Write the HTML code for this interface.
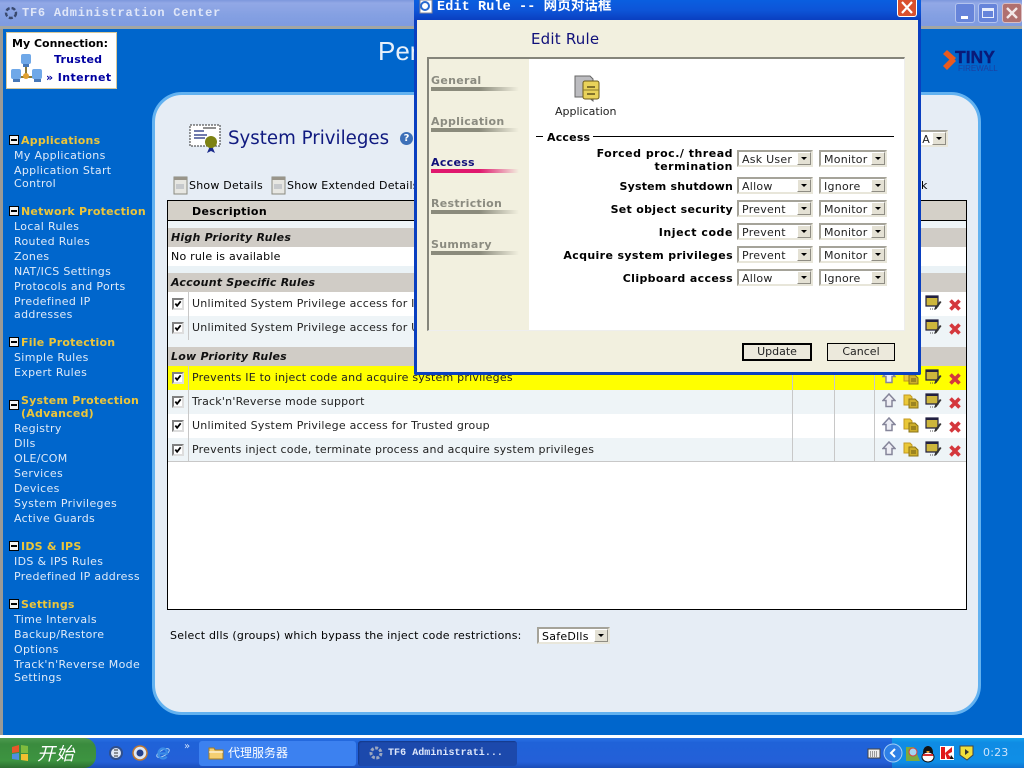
<!DOCTYPE html>
<html><head><meta charset="utf-8"><style>
html,body{margin:0;padding:0;width:1024px;height:768px;overflow:hidden;background:#fff}
#r{position:absolute;left:0;top:0;width:1024px;height:768px;overflow:hidden;background:#fff;font-family:"DejaVu Sans","Noto Sans CJK SC",sans-serif}
.a{position:absolute}
.t{position:absolute;white-space:nowrap;font-size:11px;line-height:14px;color:#000;letter-spacing:.22px}
.b{font-weight:bold}
.n{color:#dfeaf8;left:14px;margin-top:1px;letter-spacing:.33px}
.h{color:#ecc53a;left:21px;font-weight:bold;margin-top:1px;letter-spacing:.22px}
.m{position:absolute;left:9px;width:10px;height:10px;background:#f4f4f4;border:1px solid #000;box-sizing:border-box}
.m:after{content:"";position:absolute;left:1px;top:3px;width:6px;height:2px;background:#000}
.s{position:absolute;height:17px;box-sizing:border-box;background:#fff;border:2px solid;border-color:#a5a399 #e8e6da #e8e6da #a5a399;font-size:11px;line-height:15px;padding-left:3px;color:#222;white-space:nowrap;letter-spacing:.25px}
.s:after{content:"";position:absolute;right:0;top:0;width:14px;height:13px;background:#e4e1d4;border:1px solid;border-color:#fff #8f8d84 #8f8d84 #fff;box-sizing:border-box}
.s:before{content:"";position:absolute;right:4px;top:5px;z-index:2;border:3px solid transparent;border-top:3px solid #000;border-bottom:0}
.row{position:absolute;left:168px;width:798px;height:24px}
.sec{position:absolute;left:168px;width:798px;background:#d0ccc6;height:19px}
.sec span{position:absolute;left:3px;top:3px;font:italic bold 11px/14px "DejaVu Sans",sans-serif;color:#111;letter-spacing:.22px}
.cb{position:absolute;left:172px;width:12px;height:12px;box-sizing:border-box;background:#fff;border:2px solid;border-color:#808080 #ddd #ddd #808080}
.cb svg{position:absolute;left:0;top:0;width:8px;height:8px}
.nh{position:absolute;left:431px;font-size:11px;line-height:14px;font-weight:bold;color:#8b8b80;white-space:nowrap;margin-top:1px;letter-spacing:.3px}
.nl{position:absolute;left:431px;width:88px;height:4px;background:linear-gradient(90deg,#8b8b7c 0%,#8b8b7c 55%,#f2f0df 100%)}
.lb{position:absolute;right:291px;text-align:right;font-weight:bold;font-size:11px;line-height:13px;color:#000;white-space:nowrap;letter-spacing:.36px}
.btn{position:absolute;box-sizing:border-box;background:#ecE9dc;font-size:11px;line-height:12px;text-align:center;color:#222}
</style></head><body><div id="r">
<svg width="0" height="0" style="position:absolute"><defs>
<symbol id="up" viewBox="0 0 14 15"><path d="M7 1L1 7.500H4V13.500H10V7.500H13Z" fill="#eeeef4" stroke="#85859a" stroke-width="1.500"/></symbol>
<symbol id="cp" viewBox="0 0 16 15"><path d="M1 1h6l2 2v8H1z" fill="#eac838" stroke="#c49a20"/><path d="M6 5h6l3 3v6H6z" fill="#cdae2c" stroke="#8a7418"/><path d="M8 9h5M8 11h5" stroke="#6a5a14"/></symbol>
<symbol id="ed" viewBox="0 0 17 17"><path d="M1 1h12v10H1z" fill="#cdb63c" stroke="#222040" stroke-width="1.200"/><path d="M1 2h12" stroke="#222040" stroke-width="2"/><path d="M10 12l5-6 1.500 1-5 7-2 1z" fill="#333"/><path d="M5 14h1M7 14h1M9 14h1" stroke="#555"/></symbol>
<symbol id="x" viewBox="0 0 12 12"><path d="M1.500 1.500l9 9M10.500 1.500l-9 9" stroke="#d4373c" stroke-width="3.600"/></symbol>
<symbol id="ck" viewBox="0 0 9 9"><path d="M1.500 4l2 2.500 4-5" fill="none" stroke="#000" stroke-width="2"/></symbol>
<symbol id="doc" viewBox="0 0 15 19"><path d="M1 1h13v17H1z" fill="#e7e7e2" stroke="#8a8a80"/><path d="M1 1h13v3H1z" fill="#99958a"/><path d="M3 8h8v5H3z" fill="#c6c9cc"/></symbol>
</defs></svg>

<!-- main window -->
<div class="a" style="left:0;top:0;width:1022px;height:736px;background:#0066cc"></div>
<div class="a" style="left:0;top:26px;width:3px;height:710px;background:#9a9a96"></div>
<div class="a" style="left:0;top:0;width:1022px;height:26px;background:linear-gradient(180deg,#7d97dd 0%,#92a8e6 12%,#84a0e2 60%,#7f9be0 100%)"></div>
<div class="a" style="left:0;top:26px;width:1022px;height:3px;background:#a3a6a2"></div>
<svg class="a" style="left:3px;top:5px" width="16" height="16"><circle cx="8" cy="8" r="5" fill="none" stroke="#3a4a70" stroke-width="2.400" stroke-dasharray="4 2"/></svg>
<div class="t b" style="left:22px;top:6px;font-family:'Liberation Mono',monospace;font-size:12px;color:#dfe6f8;letter-spacing:.76px">TF6 Administration Center</div>
<div class="a" style="left:955px;top:3px;width:20px;height:20px;background:#6684da;border:1px solid #b3c3ee;border-radius:3px;box-sizing:border-box"><div class="a" style="left:5px;bottom:3px;width:7px;height:3px;background:#fff"></div></div>
<div class="a" style="left:978px;top:3px;width:20px;height:20px;background:#6684da;border:1px solid #b3c3ee;border-radius:3px;box-sizing:border-box"><div class="a" style="left:3px;top:4px;width:12px;height:10px;border:1px solid #e8eefc;border-top-width:3px;box-sizing:border-box"></div></div>
<div class="a" style="left:1002px;top:3px;width:20px;height:20px;background:#b0706f;border:1px solid #d9bcc0;border-radius:3px;box-sizing:border-box"><svg width="18" height="18" style="position:absolute;left:0;top:0"><path d="M4 4l10 10M14 4l-10 10" stroke="#f3e8e8" stroke-width="2.400"/></svg></div>

<!-- connection box -->
<div class="a" style="left:6px;top:32px;width:111px;height:57px;background:#fff;border:1px solid #d8c89a;box-sizing:border-box"></div>
<div class="t b" style="left:12px;top:37px;letter-spacing:0">My Connection:</div>
<div class="t b" style="left:54px;top:53px;color:#0000a0">Trusted</div>
<div class="t b" style="left:46px;top:71px;color:#0000a0;letter-spacing:.4px">» Internet</div>
<svg class="a" style="left:9px;top:52px" width="34" height="34"><path d="M17 12V24M8 25H27" stroke="#8a7a3a" stroke-width="2"/><circle cx="17" cy="24" r="3" fill="#e0a030"/><rect x="12" y="2" width="10" height="10" rx="2" fill="#6fa8e8"/><rect x="14" y="12" width="6" height="3" fill="#4678b8"/><rect x="2" y="17" width="10" height="10" rx="2" fill="#6fa8e8"/><rect x="4" y="27" width="7" height="3" fill="#4678b8"/><rect x="23" y="17" width="10" height="10" rx="2" fill="#6fa8e8"/><rect x="25" y="27" width="7" height="3" fill="#4678b8"/></svg>

<div class="t" style="left:378px;top:35px;font:26px/32px 'Liberation Sans',sans-serif;color:#e8f0fa;letter-spacing:0">Personal Firewall</div>

<!-- logo -->
<svg class="a" style="left:941px;top:49px" width="17" height="22"><path d="M2 5L6 1l9 8-4 4z" fill="#ea5a1f"/><path d="M2 17l9-9 4 4-9 9z" fill="#ea5a1f"/></svg>
<div class="t b" style="left:955px;top:47px;font:bold 17.500px/20px 'Liberation Sans',sans-serif;color:#0a1a78;letter-spacing:0;-webkit-text-stroke:.4px #0a1a78">TINY</div>
<div class="t" style="left:958px;top:64px;font:8px/9px 'Liberation Sans',sans-serif;color:#1c3fa0;letter-spacing:0">FIREWALL</div>

<!-- sidebar -->
<div class="m" style="top:135px"></div><div class="t h" style="top:133px">Applications</div>
<div class="t n" style="top:148px">My Applications</div>
<div class="t n" style="top:163px">Application Start</div>
<div class="t n" style="top:176px">Control</div>
<div class="m" style="top:206px"></div><div class="t h" style="top:204px">Network Protection</div>
<div class="t n" style="top:219px">Local Rules</div>
<div class="t n" style="top:234px">Routed Rules</div>
<div class="t n" style="top:249px">Zones</div>
<div class="t n" style="top:264px">NAT/ICS Settings</div>
<div class="t n" style="top:279px">Protocols and Ports</div>
<div class="t n" style="top:294px">Predefined IP</div>
<div class="t n" style="top:307px">addresses</div>
<div class="m" style="top:337px"></div><div class="t h" style="top:335px">File Protection</div>
<div class="t n" style="top:350px">Simple Rules</div>
<div class="t n" style="top:365px">Expert Rules</div>
<div class="m" style="top:400px"></div><div class="t h" style="top:393px">System Protection</div>
<div class="t h" style="top:406px">(Advanced)</div>
<div class="t n" style="top:421px">Registry</div>
<div class="t n" style="top:436px">Dlls</div>
<div class="t n" style="top:451px">OLE/COM</div>
<div class="t n" style="top:466px">Services</div>
<div class="t n" style="top:481px">Devices</div>
<div class="t n" style="top:496px">System Privileges</div>
<div class="t n" style="top:511px">Active Guards</div>
<div class="m" style="top:541px"></div><div class="t h" style="top:539px">IDS &amp; IPS</div>
<div class="t n" style="top:554px">IDS &amp; IPS Rules</div>
<div class="t n" style="top:569px">Predefined IP address</div>
<div class="m" style="top:599px"></div><div class="t h" style="top:597px">Settings</div>
<div class="t n" style="top:612px">Time Intervals</div>
<div class="t n" style="top:627px">Backup/Restore</div>
<div class="t n" style="top:642px">Options</div>
<div class="t n" style="top:657px">Track'n'Reverse Mode</div>
<div class="t n" style="top:670px">Settings</div>

<!-- panel -->
<div class="a" style="left:152px;top:92px;width:829px;height:623px;box-sizing:border-box;background:#e6edf5;border:3px solid #63b2f0;border-radius:30px"></div>
<svg class="a" style="left:189px;top:124px" width="34" height="30"><path d="M1 1h30v21H1z" fill="#fff" stroke="#333" stroke-dasharray="2 1"/><path d="M5 7h10M5 11h13M5 14h11" stroke="#1a2a7a" stroke-width="1.300"/><path d="M14 4h13" stroke="#222"/><path d="M21 22l-3 7 4-2 4 2-3-7z" fill="#1a2a8a"/><circle cx="22" cy="18" r="6" fill="#7d8212"/></svg>
<div class="t" style="left:228px;top:126px;font-size:18.200px;line-height:26px;color:#101a80;letter-spacing:0">System Privileges</div>
<div class="a" style="left:400px;top:132px;width:13px;height:13px;border-radius:50%;background:#3d70b8;color:#fff;font:bold 10px/13px 'DejaVu Sans',sans-serif;text-align:center">?</div>
<svg class="a" style="left:173px;top:176px" width="15" height="19"><use href="#doc"/></svg>
<div class="t" style="left:189px;top:179px">Show Details</div>
<svg class="a" style="left:271px;top:176px" width="15" height="19"><use href="#doc"/></svg>
<div class="t" style="left:287px;top:179px">Show Extended Details</div>
<div class="t" style="left:921px;top:179px">k</div>
<div class="s" style="left:900px;top:130px;width:48px;color:#222;text-align:right;padding:0 16px 0 0">A</div>

<!-- table -->
<div class="a" style="left:167px;top:200px;width:800px;height:410px;box-sizing:border-box;background:#fff;border:1px solid #000"></div>
<div class="a" style="left:168px;top:201px;width:798px;height:19px;background:#d4d0c8;border-bottom:1px solid #000"></div>
<div class="t b" style="left:192px;top:205px;letter-spacing:.35px">Description</div>
<div class="a" style="left:168px;top:221px;width:798px;height:7px;background:#eef4f7"></div>
<div class="sec" style="top:228px"><span>High Priority Rules</span></div>
<div class="row" style="top:247px;height:19px;background:#fff"></div>
<div class="t" style="left:171px;top:250px">No rule is available</div>
<div class="a" style="left:168px;top:266px;width:798px;height:7px;background:#eaf2f6"></div>
<div class="sec" style="top:273px"><span>Account Specific Rules</span></div>
<div class="row" style="top:292px;background:#fff"></div>
<div class="row" style="top:316px;background:#eef4f7"></div>
<div class="a" style="left:168px;top:340px;width:798px;height:7px;background:#eef4f7"></div>
<div class="sec" style="top:347px"><span>Low Priority Rules</span></div>
<div class="row" style="top:366px;background:#ffff00"></div>
<div class="row" style="top:390px;background:#eef4f7"></div>
<div class="row" style="top:414px;background:#fff"></div>
<div class="row" style="top:438px;background:#eef4f7;border-bottom:1px solid #c8c8c8;height:23px"></div>
<div class="a" style="left:188px;top:292px;width:1px;height:48px;background:#c8c8c8"></div>
<div class="a" style="left:188px;top:366px;width:1px;height:95px;background:#c8c8c8"></div>
<div class="a" style="left:792px;top:366px;width:1px;height:95px;background:#c8c8c8"></div>
<div class="a" style="left:834px;top:366px;width:1px;height:95px;background:#c8c8c8"></div>
<div class="a" style="left:874px;top:366px;width:1px;height:95px;background:#c8c8c8"></div>

<div class="cb" style="top:298px"><svg viewBox="0 0 9 9"><use href="#ck"/></svg></div>
<div class="cb" style="top:322px"><svg viewBox="0 0 9 9"><use href="#ck"/></svg></div>
<div class="cb" style="top:372px"><svg viewBox="0 0 9 9"><use href="#ck"/></svg></div>
<div class="cb" style="top:396px"><svg viewBox="0 0 9 9"><use href="#ck"/></svg></div>
<div class="cb" style="top:420px"><svg viewBox="0 0 9 9"><use href="#ck"/></svg></div>
<div class="cb" style="top:444px"><svg viewBox="0 0 9 9"><use href="#ck"/></svg></div>
<div class="t" style="left:192px;top:297px;color:#222">Unlimited System Privilege access for IE</div>
<div class="t" style="left:192px;top:321px;color:#222">Unlimited System Privilege access for User</div>
<div class="t" style="left:192px;top:371px;color:#222">Prevents IE to inject code and acquire system privileges</div>
<div class="t" style="left:192px;top:395px;color:#222">Track'n'Reverse mode support</div>
<div class="t" style="left:192px;top:419px;color:#222">Unlimited System Privilege access for Trusted group</div>
<div class="t" style="left:192px;top:443px;color:#222">Prevents inject code, terminate process and acquire system privileges</div>

<svg class="a" style="left:925px;top:295px" width="17" height="17"><use href="#ed"/></svg><svg class="a" style="left:949px;top:299px" width="12" height="12"><use href="#x"/></svg>
<svg class="a" style="left:925px;top:319px" width="17" height="17"><use href="#ed"/></svg><svg class="a" style="left:949px;top:323px" width="12" height="12"><use href="#x"/></svg>
<svg class="a" style="left:882px;top:369px" width="14" height="15"><use href="#up"/></svg><svg class="a" style="left:903px;top:370px" width="16" height="15"><use href="#cp"/></svg><svg class="a" style="left:925px;top:369px" width="17" height="17"><use href="#ed"/></svg><svg class="a" style="left:949px;top:373px" width="12" height="12"><use href="#x"/></svg>
<svg class="a" style="left:882px;top:393px" width="14" height="15"><use href="#up"/></svg><svg class="a" style="left:903px;top:394px" width="16" height="15"><use href="#cp"/></svg><svg class="a" style="left:925px;top:393px" width="17" height="17"><use href="#ed"/></svg><svg class="a" style="left:949px;top:397px" width="12" height="12"><use href="#x"/></svg>
<svg class="a" style="left:882px;top:417px" width="14" height="15"><use href="#up"/></svg><svg class="a" style="left:903px;top:418px" width="16" height="15"><use href="#cp"/></svg><svg class="a" style="left:925px;top:417px" width="17" height="17"><use href="#ed"/></svg><svg class="a" style="left:949px;top:421px" width="12" height="12"><use href="#x"/></svg>
<svg class="a" style="left:882px;top:441px" width="14" height="15"><use href="#up"/></svg><svg class="a" style="left:903px;top:442px" width="16" height="15"><use href="#cp"/></svg><svg class="a" style="left:925px;top:441px" width="17" height="17"><use href="#ed"/></svg><svg class="a" style="left:949px;top:445px" width="12" height="12"><use href="#x"/></svg>

<div class="t" style="left:170px;top:629px">Select dlls (groups) which bypass the inject code restrictions:</div>
<div class="s" style="left:537px;top:627px;width:73px;color:#000">SafeDlls</div>

<!-- dialog -->
<div class="a" style="left:414px;top:-6px;width:507px;height:381px;box-sizing:border-box;background:#f2f0df;border:3px solid #0a3fc0;border-top:0;border-radius:0 0 2px 2px"></div>
<div class="a" style="left:414px;top:0;width:507px;height:20px;background:linear-gradient(180deg,#0a5fe0 0%,#0d55d8 50%,#0a3fc0 100%)"></div>
<svg class="a" style="left:418px;top:0" width="16" height="14"><rect x="2" y="0" width="12" height="13" fill="#fff" stroke="#889"/><circle cx="7" cy="6" r="4" fill="none" stroke="#2a6ad0" stroke-width="2"/></svg>
<div class="t b" style="left:437px;top:1px;font-family:'Liberation Mono','Noto Sans CJK SC',monospace;font-size:13.500px;line-height:13px;color:#fff;letter-spacing:.1px">Edit Rule -- 网页对话框</div>
<div class="a" style="left:897px;top:0;width:20px;height:17px;background:#d9502e;border:1px solid #fff;border-top:0;border-radius:0 0 3px 3px;box-sizing:border-box"><svg width="18" height="16" style="position:absolute;left:0;top:0"><path d="M4 2l10 11M14 2L4 13" stroke="#fff" stroke-width="2.200"/></svg></div>
<div class="t" style="left:531px;top:30px;font-size:15px;line-height:18px;color:#10107a;letter-spacing:.2px">Edit Rule</div>
<div class="a" style="left:427px;top:57px;width:478px;height:274px;box-sizing:border-box;background:#fff;border:1px solid #eee;border-top:2px solid #85857a;border-left:2px solid #85857a"></div>
<div class="a" style="left:429px;top:59px;width:100px;height:271px;background:#f2f0df"></div>
<div class="nh" style="top:73px">General</div><div class="nl" style="top:87px"></div>
<div class="nh" style="top:114px">Application</div><div class="nl" style="top:128px"></div>
<div class="nh" style="top:155px;color:#10107a">Access</div><div class="nl" style="top:169px;background:linear-gradient(90deg,#e0186e 0%,#e0186e 55%,#f2f0df 100%)"></div>
<div class="nh" style="top:196px">Restriction</div><div class="nl" style="top:210px"></div>
<div class="nh" style="top:237px">Summary</div><div class="nl" style="top:251px"></div>

<svg class="a" style="left:574px;top:75px" width="26" height="28"><path d="M1 1h15l3 3v22l-5-4H1z" fill="#bcbcc0" stroke="#666"/><rect x="9" y="6" width="16" height="18" rx="2" fill="#e9d25a" stroke="#6b5a1a"/><path d="M13 12h8M13 19h8" stroke="#443a10" stroke-width="1.200"/><path d="M9 15h16" stroke="#8a7a2a"/></svg>
<div class="t" style="left:555px;top:105px;color:#222;letter-spacing:0">Application</div>
<div class="a" style="left:536px;top:136px;width:7px;height:1px;background:#000"></div>
<div class="t b" style="left:547px;top:131px;letter-spacing:.2px">Access</div>
<div class="a" style="left:593px;top:136px;width:301px;height:1px;background:#000"></div>

<div class="lb" style="top:147px;width:200px;letter-spacing:.5px">Forced proc./ thread<br>termination</div>
<div class="lb" style="top:180px;letter-spacing:.2px">System shutdown</div>
<div class="lb" style="top:203px;letter-spacing:.3px">Set object security</div>
<div class="lb" style="top:226px;letter-spacing:.55px">Inject code</div>
<div class="lb" style="top:249px">Acquire system privileges</div>
<div class="lb" style="top:272px">Clipboard access</div>
<div class="s" style="left:737px;top:150px;width:76px">Ask User</div><div class="s" style="left:819px;top:150px;width:68px">Monitor</div>
<div class="s" style="left:737px;top:177px;width:76px">Allow</div><div class="s" style="left:819px;top:177px;width:68px">Ignore</div>
<div class="s" style="left:737px;top:200px;width:76px">Prevent</div><div class="s" style="left:819px;top:200px;width:68px">Monitor</div>
<div class="s" style="left:737px;top:223px;width:76px">Prevent</div><div class="s" style="left:819px;top:223px;width:68px">Monitor</div>
<div class="s" style="left:737px;top:246px;width:76px">Prevent</div><div class="s" style="left:819px;top:246px;width:68px">Monitor</div>
<div class="s" style="left:737px;top:269px;width:76px">Allow</div><div class="s" style="left:819px;top:269px;width:68px">Ignore</div>
<div class="btn" style="left:742px;top:343px;width:70px;height:18px;border:2px solid #000;line-height:14px">Update</div>
<div class="btn" style="left:827px;top:343px;width:68px;height:18px;border:1px solid #000;line-height:16px">Cancel</div>

<!-- taskbar -->
<div class="a" style="left:0;top:735px;width:1024px;height:3px;background:#fff"></div>
<div class="a" style="left:0;top:738px;width:1024px;height:30px;background:linear-gradient(180deg,#2a72e4 0%,#1f62d8 15%,#2460d8 80%,#1a4cb8 100%)"></div>
<div class="a" style="left:0;top:738px;width:96px;height:30px;background:linear-gradient(180deg,#4d9a4f 0%,#3a8b3e 20%,#3d9440 75%,#2c6e30 100%);border-radius:0 12px 12px 0"></div>
<svg class="a" style="left:10px;top:744px" width="20" height="18"><path d="M2 3l7-2v7l-7 1z" fill="#e8572a"/><path d="M11 1l7 1v7h-7z" fill="#7fbb3e"/><path d="M2 10l7-1v7l-7-1z" fill="#4f8fe0"/><path d="M11 10h7v7l-7-1z" fill="#f0c030"/></svg>
<div class="t" style="left:37px;top:742px;font:italic 18px/22px 'Noto Sans CJK SC',sans-serif;color:#fff;letter-spacing:1px">开始</div>
<svg class="a" style="left:108px;top:745px" width="16" height="16"><circle cx="8" cy="8" r="6" fill="#dfe8f5" stroke="#30508c" stroke-width="2"/><path d="M6 5h4M6 8h4M6 11h4" stroke="#333"/></svg>
<svg class="a" style="left:132px;top:745px" width="16" height="16"><circle cx="8" cy="8" r="7" fill="#dfe8f5" stroke="#c07830" stroke-width="1.500"/><circle cx="8" cy="8" r="3.500" fill="#23408c"/></svg>
<svg class="a" style="left:155px;top:745px" width="16" height="16"><ellipse cx="8" cy="8" rx="7" ry="3" fill="none" stroke="#a8d0f0" stroke-width="1" transform="rotate(-30 8 8)"/><path d="M3.500 8.500h8.500c0-3-1.800-5-4-5s-4.500 2-4.500 5 2 5 4.500 5c1.500 0 3-.7 3.500-2" fill="none" stroke="#3a8be6" stroke-width="2.200"/></svg>
<div class="t" style="left:184px;top:741px;font-size:10px;line-height:12px;color:#cfe0f8">»</div>
<div class="a" style="left:199px;top:741px;width:157px;height:25px;background:#3c81f0;border-radius:3px"></div>
<svg class="a" style="left:208px;top:746px" width="16" height="14"><path d="M1 2h5l1 2h8v9H1z" fill="#f4cf72" stroke="#a67c22"/><path d="M1 6h14" stroke="#fff"/></svg>
<div class="t" style="left:228px;top:746px;font:12px/14px 'Noto Sans CJK SC',sans-serif;color:#fff;letter-spacing:0">代理服务器</div>
<div class="a" style="left:358px;top:741px;width:159px;height:25px;background:#1c49ac;border-radius:3px;box-shadow:inset 1px 1px 1px #153a8c"></div>
<svg class="a" style="left:368px;top:745px" width="16" height="16"><circle cx="8" cy="8" r="5" fill="none" stroke="#9aa6c0" stroke-width="3" stroke-dasharray="3 1.500"/></svg>
<div class="t b" style="left:388px;top:747px;font-family:'Liberation Mono',monospace;font-size:10px;line-height:14px;color:#dde6fa;letter-spacing:.05px">TF6 Administrati...</div>

<!-- tray -->
<div class="a" style="left:892px;top:738px;width:132px;height:30px;background:linear-gradient(180deg,#15a3ee 0%,#0f8ce4 15%,#0f8ee6 80%,#0f72d0 100%)"></div>
<svg class="a" style="left:867px;top:746px" width="14" height="14"><rect x="1" y="3" width="12" height="9" fill="#eee" stroke="#444"/><path d="M3 6h8M3 8h8M3 10h8" stroke="#444" stroke-dasharray="1 1"/></svg>
<svg class="a" style="left:883px;top:742px" width="20" height="22"><circle cx="10" cy="11" r="9" fill="#2e80e6" stroke="#a5cef5"/><path d="M12 7l-4 4 4 4" fill="none" stroke="#fff" stroke-width="2"/></svg>
<svg class="a" style="left:904px;top:745px" width="18" height="17"><path d="M2 2h8l6 14H2z" fill="#7caa3f"/><circle cx="9" cy="7" r="4" fill="#a5d4f0" stroke="#d84040"/></svg>
<svg class="a" style="left:920px;top:745px" width="16" height="18"><ellipse cx="8" cy="7" rx="5" ry="6" fill="#111"/><ellipse cx="8" cy="12" rx="6" ry="5" fill="#fff" stroke="#111"/><path d="M3 10h10" stroke="#d83030" stroke-width="2"/><path d="M6 6h4l-2 2z" fill="#f0a020"/></svg>
<svg class="a" style="left:939px;top:745px" width="16" height="16"><path d="M1 1h14v14H1z" fill="#fff"/><path d="M2 2h4v12H2zM6 8l7-6v5l-4 2 4 5H8z" fill="#e01818"/><path d="M12 10l3 4h-4z" fill="#111"/></svg>
<svg class="a" style="left:959px;top:745px" width="15" height="16"><path d="M1 1h13v9l-6 5-7-5z" fill="#f2de3a" stroke="#444"/><path d="M6 4l4 3-4 3z" fill="#333"/></svg>
<div class="t" style="left:983px;top:746px;color:#cfe4fa;letter-spacing:.2px">0:23</div>
</div></body></html>
